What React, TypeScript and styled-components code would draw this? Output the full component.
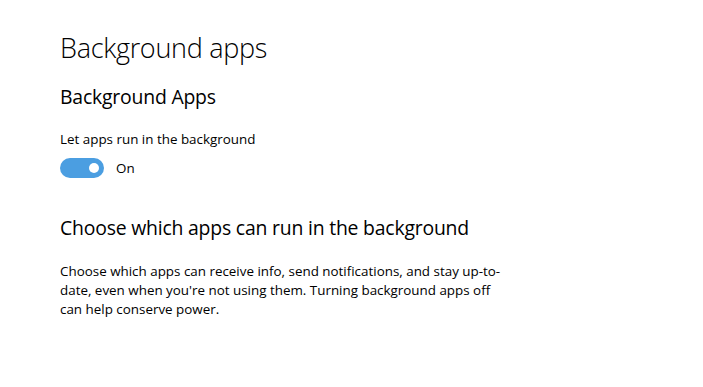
import { useState } from 'react';
import styled, { createGlobalStyle } from 'styled-components';

const GlobalStyle = createGlobalStyle`
  html, body {
    margin: 0;
    background: #ffffff;
  }
  body {
    font-family: 'Open Sans', 'Noto Sans', sans-serif;
    color: #000;
  }
`;

const Page = styled.div`
  padding: 28px 0 0 60px;
  width: 703px;
  height: 387px;
  box-sizing: border-box;
`;

const Title = styled.h1`
  margin: 0;
  font-size: 27px;
  font-weight: 300;
  line-height: 40px;
  letter-spacing: -0.3px;
`;

const SectionHeading = styled.h2<{ $top: number }>`
  margin: ${(p) => p.$top}px 0 0;
  font-size: 19.4px;
  font-weight: 400;
  line-height: 28px;
  letter-spacing: -0.2px;
`;

const Label = styled.div`
  margin-top: 18px;
  font-size: 13.4px;
  line-height: 20px;
`;

const ToggleRow = styled.div`
  display: flex;
  align-items: center;
  gap: 12px;
  margin-top: 9px;
  font-size: 13.4px;
`;

const Switch = styled.button<{ $on: boolean }>`
  position: relative;
  width: 44px;
  height: 20px;
  padding: 0;
  border: none;
  border-radius: 10px;
  background: ${(p) => (p.$on ? '#4b9ee1' : '#bbb')};
  cursor: pointer;

  &::after {
    content: '';
    position: absolute;
    top: 5px;
    left: ${(p) => (p.$on ? '29px' : '5px')};
    width: 10px;
    height: 10px;
    border-radius: 50%;
    background: #fff;
  }
`;

const Paragraph = styled.p`
  margin: 20px 0 0;
  width: 445px;
  font-size: 13.4px;
  line-height: 19px;
`;

export default function App() {
  const [on, setOn] = useState(true);
  return (
    <Page>
      <GlobalStyle />
      <Title>Background apps</Title>
      <SectionHeading $top={15}>Background Apps</SectionHeading>
      <Label>Let apps run in the background</Label>
      <ToggleRow>
        <Switch $on={on} onClick={() => setOn(!on)} aria-label="Let apps run in the background" />
        <span>{on ? 'On' : 'Off'}</span>
      </ToggleRow>
      <SectionHeading $top={36}>Choose which apps can run in the background</SectionHeading>
      <Paragraph>
        Choose which apps can receive info, send notifications, and stay up-to-date, even when
        you're not using them. Turning background apps off can help conserve power.
      </Paragraph>
    </Page>
  );
}
